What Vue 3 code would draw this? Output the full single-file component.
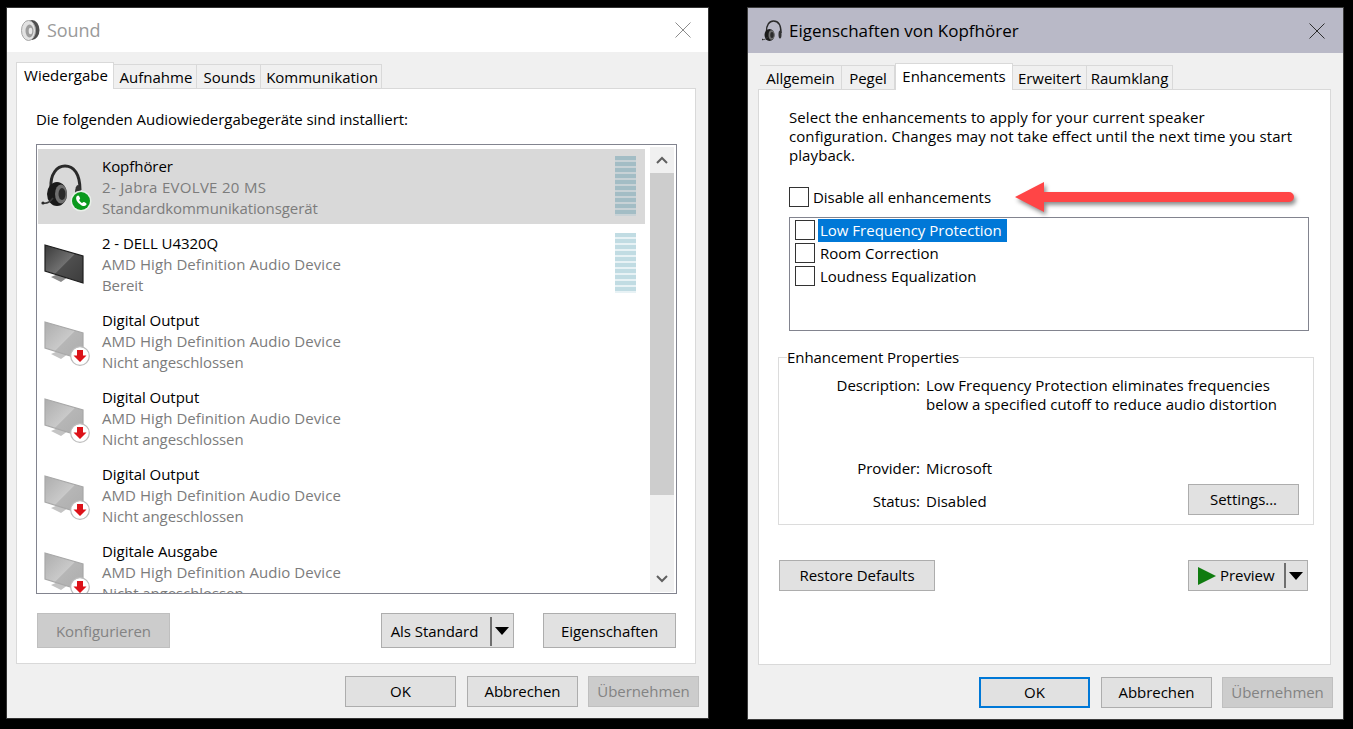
<script setup>
const leftTabs = [
  { label: 'Wiedergabe', width: 98, active: true },
  { label: 'Aufnahme', width: 83 },
  { label: 'Sounds', width: 64 },
  { label: 'Kommunikation', width: 121 }
]
const rightTabs = [
  { label: 'Allgemein', width: 82 },
  { label: 'Pegel', width: 53 },
  { label: 'Enhancements', width: 118, active: true },
  { label: 'Erweitert', width: 74 },
  { label: 'Raumklang', width: 86 }
]
const devices = [
  { name: 'Kopfhörer', driver: '2- Jabra EVOLVE 20 MS', state: 'Standardkommunikationsgerät', kind: 'headset', meter: true, selected: true },
  { name: '2 - DELL U4320Q', driver: 'AMD High Definition Audio Device', state: 'Bereit', kind: 'monitor', meter: true },
  { name: 'Digital Output', driver: 'AMD High Definition Audio Device', state: 'Nicht angeschlossen', kind: 'off' },
  { name: 'Digital Output', driver: 'AMD High Definition Audio Device', state: 'Nicht angeschlossen', kind: 'off' },
  { name: 'Digital Output', driver: 'AMD High Definition Audio Device', state: 'Nicht angeschlossen', kind: 'off' },
  { name: 'Digitale Ausgabe', driver: 'AMD High Definition Audio Device', state: 'Nicht angeschlossen', kind: 'off' }
]
const enhancements = [
  { label: 'Low Frequency Protection', selected: true },
  { label: 'Room Correction' },
  { label: 'Loudness Equalization' }
]
</script>

<template>
  <div class="desktop">
    <svg class="defs" width="0" height="0" aria-hidden="true">
      <defs>
        <linearGradient id="screenDark" x1="0" y1="0" x2="1" y2="1">
          <stop offset="0" stop-color="#3a3a3a" />
          <stop offset="0.5" stop-color="#707070" />
          <stop offset="0.52" stop-color="#4e4e4e" />
          <stop offset="1" stop-color="#3c3c3c" />
        </linearGradient>
        <linearGradient id="screenGrey" x1="0" y1="0" x2="1" y2="1">
          <stop offset="0" stop-color="#adadad" />
          <stop offset="0.5" stop-color="#c9c9c9" />
          <stop offset="0.52" stop-color="#b6b6b6" />
          <stop offset="1" stop-color="#acacac" />
        </linearGradient>
        <symbol id="headset" viewBox="0 0 40 44" overflow="visible">
          <path d="M9 24C8 10 15 2 23 2C32 2 38 10 38 26" fill="none" stroke="#2a2a2a" stroke-width="3" />
          <ellipse cx="36" cy="29" rx="3" ry="8" fill="#333" />
          <ellipse cx="15" cy="30" rx="10" ry="12" fill="#1a1a1a" />
          <ellipse cx="19" cy="30" rx="6" ry="9.500" fill="#6f6f6f" />
          <ellipse cx="20" cy="30" rx="3.500" ry="6" fill="#2b2b2b" />
          <path d="M1 39C5 40 8 38 11 34" fill="none" stroke="#3a3a3a" stroke-width="1.600" />
          <circle cx="1" cy="39" r="1.600" fill="#2a2a2a" />
        </symbol>
        <symbol id="monitorDark" viewBox="0 0 40 40" overflow="visible">
          <path d="M7 33L14 30L24 33L17 38Z" fill="#8a8a8a" />
          <path d="M1 1L39 12V39L1 27Z" fill="url(#screenDark)" stroke="#1e1e1e" stroke-width="1.200" />
        </symbol>
        <symbol id="monitorGrey" viewBox="0 0 40 40" overflow="visible">
          <path d="M7 33L14 30L24 33L17 38Z" fill="#c4c4c4" />
          <path d="M1 1L39 12V39L1 27Z" fill="url(#screenGrey)" stroke="#a8a8a8" stroke-width="1.200" />
        </symbol>
      </defs>
    </svg>

    <section class="window sound">
      <header class="titlebar plain">
        <svg class="app-icon" viewBox="0 0 20 24" width="20" height="24">
          <ellipse cx="12" cy="12" rx="7.500" ry="10" fill="#4f4f4f" />
          <ellipse cx="8.500" cy="12.500" rx="7" ry="10" fill="#e2e2e2" stroke="#a5a5a5" />
          <ellipse cx="9.500" cy="13" rx="4" ry="6.400" fill="#9d9d9d" />
          <ellipse cx="10.500" cy="13" rx="1.800" ry="3.200" fill="#e8e8e8" />
        </svg>
        <span class="title muted">Sound</span>
        <svg class="close" viewBox="0 0 16 16" width="16" height="16">
          <path d="M.5.500l15 15M15.500.500l-15 15" stroke="#8c8c8c" fill="none" />
        </svg>
      </header>
      <div class="client">
        <nav class="tabs tabs-left">
          <div
            v-for="t in leftTabs"
            :key="t.label"
            class="tab"
            :class="{ active: t.active }"
            :style="{ width: t.width + 'px' }"
          >{{ t.label }}</div>
        </nav>
        <div class="panel sound-panel">
          <p class="intro">Die folgenden Audiowiedergabegeräte sind installiert:</p>
          <div class="devicebox">
            <div class="rows">
              <div v-for="(d, i) in devices" :key="i" class="row" :class="{ selected: d.selected }">
                <div class="icon-col" :class="d.kind">
                  <svg v-if="d.kind === 'headset'" width="40" height="44"><use href="#headset" /></svg>
                  <svg v-else width="40" height="40"><use :href="d.kind === 'monitor' ? '#monitorDark' : '#monitorGrey'" /></svg>
                  <svg v-if="d.kind === 'headset'" class="badge green" viewBox="0 0 22 22" width="22" height="22">
                    <circle cx="11" cy="11" r="10.500" fill="#e9efe9" />
                    <circle cx="11" cy="11" r="9" fill="#0a9a1d" />
                    <path d="M6.800 6.200c.9-.9 1.900-.8 2.400.1l.8 1.600c.3.7 0 1.100-.5 1.500-.4.300-.5.500-.3.900.6 1.100 1.500 2 2.600 2.600.4.200.6.100.9-.3.400-.5.800-.8 1.500-.5l1.600.8c.9.500 1 1.500.1 2.400-1.300 1.300-3.500 1-6.200-1.400C5.900 11.300 5.500 7.500 6.800 6.200Z" fill="#fff" />
                  </svg>
                  <svg v-if="d.kind === 'off'" class="badge red" viewBox="0 0 20 20" width="20" height="20">
                    <circle cx="10" cy="10" r="9.300" fill="#fff" stroke="#bdbdbd" stroke-width="1.200" />
                    <path d="M7 4h6v5.500h3.500L10 16 3.500 9.500H7Z" fill="#dc1219" />
                  </svg>
                </div>
                <div class="lines">
                  <div class="name">{{ d.name }}</div>
                  <div class="sub driver" :class="{ jabra: d.selected }">{{ d.driver }}</div>
                  <div class="sub state">{{ d.state }}</div>
                </div>
                <div v-if="d.meter" class="meter" :class="{ dim: d.selected }">
                  <i v-for="n in 10" :key="n"></i>
                </div>
              </div>
            </div>
            <div class="scrollbar">
              <div class="sb-btn">
                <svg viewBox="0 0 12 8" width="12" height="8"><path d="M1 7l5-5 5 5" fill="none" stroke="#606060" stroke-width="2" /></svg>
              </div>
              <div class="sb-thumb"></div>
              <div class="sb-track"></div>
              <div class="sb-btn">
                <svg viewBox="0 0 12 8" width="12" height="8"><path d="M1 1l5 5 5-5" fill="none" stroke="#606060" stroke-width="2" /></svg>
              </div>
            </div>
          </div>
          <div class="device-actions">
            <button class="btn wide disabled">Konfigurieren</button>
            <div class="spacer"></div>
            <button class="btn wide split std">
              <span class="split-label">Als Standard</span>
              <i class="split-line"></i>
              <i class="caret"></i>
            </button>
            <button class="btn wide props">Eigenschaften</button>
          </div>
        </div>
        <footer class="footer">
          <button class="btn">OK</button>
          <button class="btn">Abbrechen</button>
          <button class="btn disabled">Übernehmen</button>
        </footer>
      </div>
    </section>

    <section class="window props-win">
      <header class="titlebar tinted">
        <svg class="small-headset" width="20" height="22"><use href="#headset" /></svg>
        <span class="title title-small">Eigenschaften von Kopfhörer</span>
        <svg class="close" viewBox="0 0 16 16" width="16" height="16">
          <path d="M.5.500l15 15M15.500.500l-15 15" stroke="#2e2e2e" fill="none" />
        </svg>
      </header>
      <div class="client client-right">
        <nav class="tabs tabs-right">
          <div
            v-for="t in rightTabs"
            :key="t.label"
            class="tab"
            :class="{ active: t.active }"
            :style="{ width: t.width + 'px' }"
          >{{ t.label }}</div>
        </nav>
        <div class="panel enh-panel">
          <p class="enh-intro">Select the enhancements to apply for your current speaker<br />configuration. Changes may not take effect until the next time you start<br />playback.</p>
          <label class="disable-row"><i class="check"></i><span>Disable all enhancements</span></label>
          <div class="enh-list">
            <div v-for="e in enhancements" :key="e.label" class="enh-item">
              <i class="check"></i>
              <span class="enh-label" :class="{ sel: e.selected }">{{ e.label }}</span>
            </div>
          </div>
          <fieldset class="group">
            <legend>Enhancement Properties</legend>
            <div class="prop desc">
              <span class="key">Description:</span>
              <span class="val">Low Frequency Protection eliminates frequencies<br />below a specified cutoff to reduce audio distortion</span>
            </div>
            <div class="prop provider">
              <span class="key">Provider:</span>
              <span class="val">Microsoft</span>
            </div>
            <div class="prop status">
              <span class="key">Status:</span>
              <span class="val">Disabled</span>
              <button class="btn settings">Settings...</button>
            </div>
          </fieldset>
          <div class="enh-actions">
            <button class="btn restore">Restore Defaults</button>
            <button class="btn preview">
              <svg class="play" viewBox="0 0 18 18" width="18" height="18"><path d="M0 0L18 9L0 18Z" fill="#107c10" /></svg>
              <span class="preview-label">Preview</span>
              <i class="split-line"></i>
              <i class="caret"></i>
            </button>
          </div>
        </div>
        <footer class="footer footer-right">
          <button class="btn default">OK</button>
          <button class="btn">Abbrechen</button>
          <button class="btn disabled">Übernehmen</button>
        </footer>
      </div>
    </section>

    <svg class="callout" viewBox="0 0 300 50" width="300" height="50">
      <path d="M15 27L44 12V22H289a5 5 0 0 1 0 10H44V42Z" fill="#ff4546" />
    </svg>
  </div>
</template>

<style>
html, body { margin: 0; background: #000; }
</style>

<style scoped>
.desktop {
  position: relative;
  width: 1353px;
  height: 729px;
  overflow: hidden;
  background: #000;
  display: flex;
  align-items: flex-start;
  gap: 40px;
  padding: 8px 0 0 7px;
  box-sizing: border-box;
  font: 15px/19px "Open Sans", "Noto Sans", sans-serif;
  letter-spacing: -0.05px;
  color: #000;
}
.defs { position: absolute; }
.window {
  display: flex;
  flex-direction: column;
  background: #f0f0f0;
  box-sizing: border-box;
}
.sound { width: 701px; height: 710px; box-shadow: 0 0 0 1px #333; }
.props-win { width: 595px; height: 711px; box-shadow: 0 0 0 1px #3c3c3c; }
.titlebar {
  display: flex;
  align-items: center;
  flex: none;
}
.plain { height: 44px; background: #fff; padding: 0 17px 0 13px; }
.tinted { height: 45px; background: #b9b9c7; padding: 0 18px 0 14px; }
.app-icon { flex: none; margin-right: 7px; }
.small-headset { flex: none; margin-right: 7px; }
.title { font-size: 18px; line-height: 24px; flex: 1; letter-spacing: -0.1px; }
.title-small { font-size: 17px; letter-spacing: 0; }
.muted { color: #9a9a9a; }
.close { flex: none; }

.client { flex: 1; padding: 10px 9px 0 9px; display: flex; flex-direction: column; }
.client-right { padding: 10px 12px 0 10px; }
.tabs { display: flex; align-items: flex-end; height: 26px; position: relative; z-index: 1; }
.tabs-right { margin-left: 2px; height: 26px; }
.tab {
  box-sizing: border-box;
  height: 24px;
  border: 1px solid #d9d9d9;
  border-left-width: 0;
  border-bottom: 0;
  background: #f0f0f0;
  text-align: center;
  line-height: 24px;
  white-space: nowrap;
}
.tabs-left .tab { padding-left: 2px; letter-spacing: 0; }
.tab.active {
  height: 27px;
  margin-bottom: -1px;
  border-left-width: 1px;
  background: #fff;
  line-height: 24px;
}
.panel {
  box-sizing: border-box;
  background: #fff;
  border: 1px solid #d9d9d9;
}
.sound-panel { height: 576px; width: 680px; padding: 0 0 0 19px; }
.intro { margin: 21px 0 0 0; line-height: 19px; height: 19px; white-space: nowrap; }
.devicebox {
  box-sizing: border-box;
  width: 641px;
  height: 450px;
  margin-top: 15px;
  border: 1px solid #82848f;
  display: flex;
}
.rows { width: 608px; height: 448px; overflow: hidden; padding-top: 4px; box-sizing: border-box; }
.row {
  display: flex;
  height: 75px;
  margin: 0 0 2px 1px;
}
.row.selected { background: #d9d9d9; }
.icon-col { width: 64px; flex: none; position: relative; }
.icon-col > svg:first-child { display: block; margin: 18px 0 0 6px; overflow: visible; }
.icon-col.headset > svg:first-child { margin: 15px 0 0 4px; }
.badge { position: absolute; }
.green { left: 32px; top: 41px; }
.red { left: 32px; top: 43px; }
.lines { padding-top: 7px; flex: 1; }
.name, .sub { line-height: 21px; height: 21px; white-space: nowrap; }
.sub { color: #7c7c7c; }
.driver { letter-spacing: 0.06px; }
.driver.jabra { letter-spacing: 0.3px; }
.state { letter-spacing: -0.08px; }
.meter {
  flex: none;
  margin: 7px 9px 0 0;
  width: 21px;
  height: 60px;
  display: flex;
  flex-direction: column;
  background: #e8f2f5;
}
.meter i { display: block; height: 4px; margin-bottom: 2px; background: #c1dce3; }
.meter.dim { background: #c8d2d6; }
.meter.dim i { background: #a3bdc5; }
.scrollbar {
  width: 24px;
  margin: 2px 2px 1px 5px;
  display: flex;
  flex-direction: column;
}
.sb-btn { height: 26px; flex: none; background: #f0f0f0; display: flex; align-items: center; justify-content: center; }
.sb-thumb { height: 322px; flex: none; background: #cdcdcd; }
.sb-track { flex: 1; background: #f0f0f0; }

.btn {
  box-sizing: border-box;
  width: 111px;
  height: 31px;
  flex: none;
  padding: 0;
  background: #e1e1e1;
  border: 1px solid #adadad;
  font: inherit;
  letter-spacing: inherit;
  color: #000;
  text-align: center;
}
.btn.disabled { background: #cccccc; border-color: #bfbfbf; color: #838383; }
.btn.wide { width: 133px; height: 35px; padding-top: 1px; }
.btn.default { border: 2px solid #0078d7; }
.device-actions { display: flex; margin-top: 19px; padding-left: 1px; }
.spacer { width: 211px; }
.props { margin-left: 29px; }
.split, .preview { display: flex; align-items: center; }
.split-label { box-sizing: border-box; width: 108px; padding-right: 3px; text-align: center; }
.split-line { display: block; width: 2px; height: 29px; background: #6f6f6f; flex: none; }
.preview .split-line { height: 25px; }
.caret {
  display: block;
  flex: none;
  margin-left: 3px;
  border-style: solid;
  border-width: 8px 7.500px 0;
  border-color: #000 transparent transparent;
}
.footer { display: flex; justify-content: flex-end; gap: 11px; margin-top: 12px; }
.footer .btn:last-child { margin-left: -1px; }
.footer-right { margin-right: -2px; }

.enh-panel { width: 573px; height: 576px; padding: 18px 0 0 30px; }
.enh-intro { margin: 0; width: 530px; line-height: 19px; white-space: nowrap; letter-spacing: 0.08px; }
.disable-row { display: flex; align-items: center; gap: 4px; margin-top: 22px; height: 20px; }
.check { display: block; flex: none; width: 20px; height: 20px; box-sizing: border-box; border: 1px solid #333; background: #fff; }
.enh-list {
  box-sizing: border-box;
  width: 520px;
  height: 114px;
  margin-top: 10px;
  border: 1px solid #82848f;
  padding: 1px 0 0 5px;
}
.enh-item { display: flex; height: 23px; }
.enh-item .check { margin-top: 1px; }
.enh-label { margin-left: 3px; padding: 0 5px 0 2px; line-height: 23px; letter-spacing: 0; }
.enh-label.sel { background: #0078d7; color: #fff; }
.group {
  box-sizing: border-box;
  width: 536px;
  height: 177px;
  margin: 17px 0 0 -11px;
  padding: 0;
  border: 1px solid #dcdcdc;
  min-inline-size: 0;
}
.group legend { padding: 0; margin-left: 8px; line-height: 19px; }
.prop { display: flex; }
.key { width: 141px; text-align: right; flex: none; margin-right: 6px; }
.val { letter-spacing: 0; }
.desc { margin-top: 9px; height: 38px; }
.provider { margin-top: 45px; }
.status { margin-top: 14px; }
.settings { margin-left: auto; margin-right: 14px; margin-top: -8px; }
.enh-actions { display: flex; justify-content: space-between; width: 529px; margin: 35px 0 0 -10px; }
.restore { width: 156px; }
.preview { width: 120px; padding-left: 9px; }
.play { flex: none; margin-right: 4px; }
.preview-label { width: 64px; text-align: left; }

.callout {
  position: absolute;
  left: 1000px;
  top: 170px;
  filter: drop-shadow(2px 3px 2px rgba(0, 0, 0, 0.45));
}
</style>
